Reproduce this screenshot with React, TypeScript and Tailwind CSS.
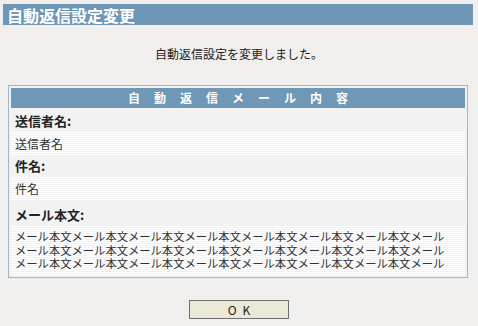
const font = { fontFamily: '"Noto Sans CJK JP", "Liberation Sans", sans-serif' };

const stripe =
  'bg-[repeating-linear-gradient(to_bottom,#ffffff_0px,#ffffff_1px,#f1f1f1_1px,#f1f1f1_2px)]';

function LabelRow({ children }: { children: React.ReactNode }) {
  return (
    <div className="h-[22px] flex items-center px-[4px] text-[13px] font-bold text-[#222]">
      {children}
    </div>
  );
}

function ValueRow({ children }: { children: React.ReactNode }) {
  return (
    <div className={`h-[23px] flex items-center px-[4px] text-[12px] text-[#333] ${stripe}`}>
      {children}
    </div>
  );
}

export default function App() {
  const bodyLine = 'メール本文'.repeat(7) + 'メール';

  return (
    <div className="w-[478px] h-[326px] bg-[#f0efee] pt-[4px] px-[3px] overflow-hidden" style={font}>
      {/* Title */}
      <div className="h-[21px] w-[470px] bg-[#6e97b5] flex items-center pl-[4px] text-[16px] font-bold text-white leading-none">
        自動返信設定変更
      </div>

      {/* Message */}
      <div className="h-[60px] flex items-center justify-center text-[12px] text-[#222] pb-[2px]">
        自動返信設定を変更しました。
      </div>

      {/* Detail box */}
      <div className="ml-[5px] w-[460px] h-[193px] border border-[#9fb5c9] bg-[#f2f2f2] p-[2px]">
        <div className="h-[20px] bg-[#6f98b6] flex items-center justify-center text-[12px] font-bold text-white tracking-[14px] pl-[14px]">
          自動返信メール内容
        </div>
        <div className="h-[2px]" />
        <LabelRow>送信者名:</LabelRow>
        <ValueRow>送信者名</ValueRow>
        <LabelRow>件名:</LabelRow>
        <ValueRow>件名</ValueRow>
        <div className="h-[26px] flex items-center pt-[3px] px-[4px] text-[13px] font-bold text-[#222]">
          メール本文:
        </div>
        <div className={`h-[50px] px-[4px] pt-[4px] text-[11.3px] leading-[13.5px] text-[#333] whitespace-nowrap ${stripe}`}>
          {bodyLine}
          <br />
          {bodyLine}
          <br />
          {bodyLine}
        </div>
      </div>

      {/* Button */}
      <div className="flex justify-center pt-[22px]">
        <button className="w-[100px] h-[19px] bg-[#ece9d8] border border-[#6f6f6f] text-[12px] text-[#222] leading-none tracking-[6px] pl-[6px]">
          OK
        </button>
      </div>
    </div>
  );
}
